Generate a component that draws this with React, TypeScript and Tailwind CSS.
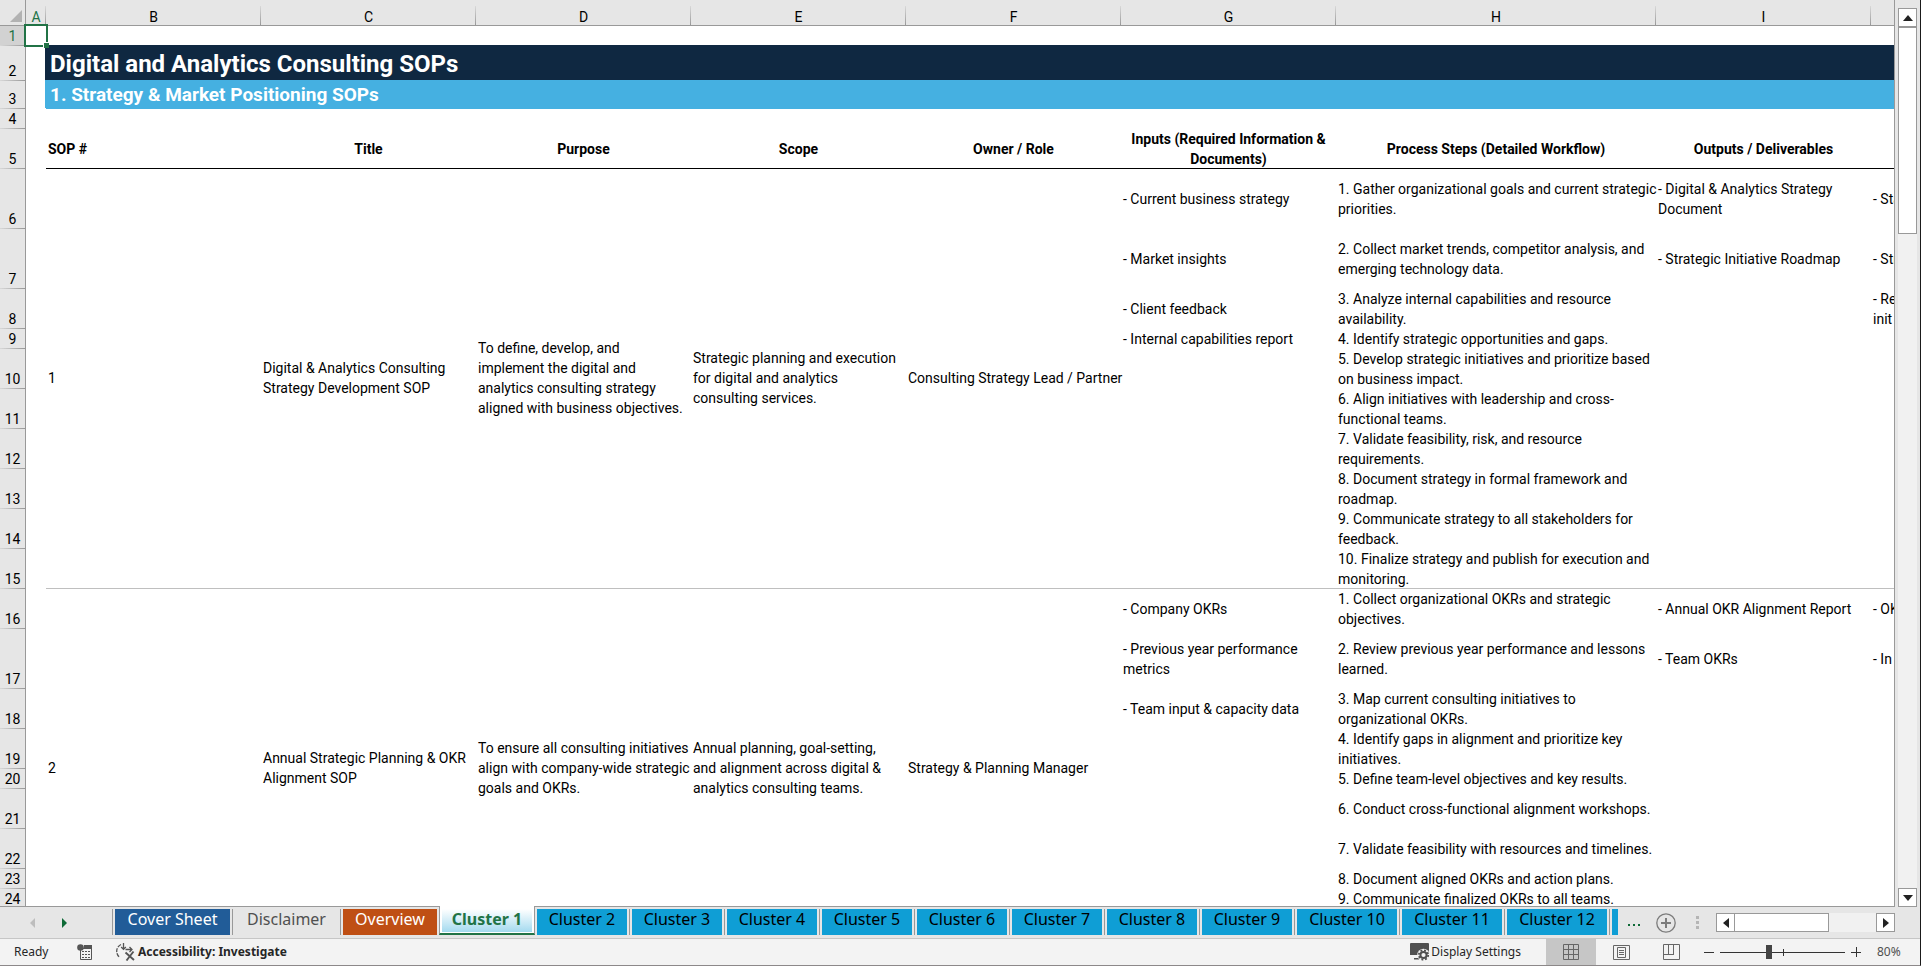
import { useState } from "react";
import clsx from "clsx";

type Cells = [string, string, string, string];

type SheetRow = {
  n: number;
  height: string;
  merged?: string[];
  span?: number;
  last?: boolean;
  cells: Cells;
};

const columns = ["B", "C", "D", "E", "F", "G", "H", "I"];

const headings = [
  "Title",
  "Purpose",
  "Scope",
  "Owner / Role",
  "Inputs (Required Information &\nDocuments)",
  "Process Steps (Detailed Workflow)",
  "Outputs / Deliverables",
  "",
];

const rows: SheetRow[] = [
  {
    n: 6,
    height: "h-[60px]",
    span: 10,
    merged: [
      "1",
      "Digital & Analytics Consulting\nStrategy Development SOP",
      "To define, develop, and\nimplement the digital and\nanalytics consulting strategy\naligned with business objectives.",
      "Strategic planning and execution\nfor digital and analytics\nconsulting services.",
      "Consulting Strategy Lead / Partner",
    ],
    cells: [
      "- Current business strategy",
      "1. Gather organizational goals and current strategic\npriorities.",
      "- Digital & Analytics Strategy\nDocument",
      "- Sta",
    ],
  },
  {
    n: 7,
    height: "h-[60px]",
    cells: [
      "- Market insights",
      "2. Collect market trends, competitor analysis, and\nemerging technology data.",
      "- Strategic Initiative Roadmap",
      "- Str",
    ],
  },
  {
    n: 8,
    height: "h-10",
    cells: [
      "- Client feedback",
      "3. Analyze internal capabilities and resource\navailability.",
      "",
      "- Re\ninit",
    ],
  },
  {
    n: 9,
    height: "h-5",
    cells: [
      "- Internal capabilities report",
      "4. Identify strategic opportunities and gaps.",
      "",
      "",
    ],
  },
  {
    n: 10,
    height: "h-10",
    cells: ["", "5. Develop strategic initiatives and prioritize based\non business impact.", "", ""],
  },
  {
    n: 11,
    height: "h-10",
    cells: ["", "6. Align initiatives with leadership and cross-\nfunctional teams.", "", ""],
  },
  {
    n: 12,
    height: "h-10",
    cells: ["", "7. Validate feasibility, risk, and resource\nrequirements.", "", ""],
  },
  {
    n: 13,
    height: "h-10",
    cells: ["", "8. Document strategy in formal framework and\nroadmap.", "", ""],
  },
  {
    n: 14,
    height: "h-10",
    cells: ["", "9. Communicate strategy to all stakeholders for\nfeedback.", "", ""],
  },
  {
    n: 15,
    height: "h-10",
    last: true,
    cells: ["", "10. Finalize strategy and publish for execution and\nmonitoring.", "", ""],
  },
  {
    n: 16,
    height: "h-10",
    span: 10,
    merged: [
      "2",
      "Annual Strategic Planning & OKR\nAlignment SOP",
      "To ensure all consulting initiatives\nalign with company-wide strategic\ngoals and OKRs.",
      "Annual planning, goal-setting,\nand alignment across digital &\nanalytics consulting teams.",
      "Strategy & Planning Manager",
    ],
    cells: [
      "- Company OKRs",
      "1. Collect organizational OKRs and strategic\nobjectives.",
      "- Annual OKR Alignment Report",
      "- OK",
    ],
  },
  {
    n: 17,
    height: "h-[60px]",
    cells: [
      "- Previous year performance\nmetrics",
      "2. Review previous year performance and lessons\nlearned.",
      "- Team OKRs",
      "- In",
    ],
  },
  {
    n: 18,
    height: "h-10",
    cells: [
      "- Team input & capacity data",
      "3. Map current consulting initiatives to\norganizational OKRs.",
      "",
      "",
    ],
  },
  {
    n: 19,
    height: "h-10",
    cells: ["", "4. Identify gaps in alignment and prioritize key\ninitiatives.", "", ""],
  },
  { n: 20, height: "h-5", cells: ["", "5. Define team-level objectives and key results.", "", ""] },
  { n: 21, height: "h-10", cells: ["", "6. Conduct cross-functional alignment workshops.", "", ""] },
  { n: 22, height: "h-10", cells: ["", "7. Validate feasibility with resources and timelines.", "", ""] },
  { n: 23, height: "h-5", cells: ["", "8. Document aligned OKRs and action plans.", "", ""] },
  { n: 24, height: "h-5", cells: ["", "9. Communicate finalized OKRs to all teams.", "", ""] },
  { n: 25, height: "h-10", last: true, cells: ["", "", "", ""] },
];

const tabs = [
  { name: "Cover Sheet", width: "w-[120px]", fill: "bg-[#215c98] text-white" },
  { name: "Disclaimer", width: "w-[108px]", fill: "text-[#505050]" },
  { name: "Overview", width: "w-[99px]", fill: "bg-[#bf4f14] text-white" },
  { name: "Cluster 1", width: "w-[96px]", fill: "" },
  { name: "Cluster 2", width: "w-[95px]", fill: "bg-[#0f9ed5] text-black" },
  { name: "Cluster 3", width: "w-[95px]", fill: "bg-[#0f9ed5] text-black" },
  { name: "Cluster 4", width: "w-[95px]", fill: "bg-[#0f9ed5] text-black" },
  { name: "Cluster 5", width: "w-[95px]", fill: "bg-[#0f9ed5] text-black" },
  { name: "Cluster 6", width: "w-[95px]", fill: "bg-[#0f9ed5] text-black" },
  { name: "Cluster 7", width: "w-[95px]", fill: "bg-[#0f9ed5] text-black" },
  { name: "Cluster 8", width: "w-[95px]", fill: "bg-[#0f9ed5] text-black" },
  { name: "Cluster 9", width: "w-[95px]", fill: "bg-[#0f9ed5] text-black" },
  { name: "Cluster 10", width: "w-[105px]", fill: "bg-[#0f9ed5] text-black" },
  { name: "Cluster 11", width: "w-[105px]", fill: "bg-[#0f9ed5] text-black" },
  { name: "Cluster 12", width: "w-[105px]", fill: "bg-[#0f9ed5] text-black" },
];

const RowHead = ({ n, selected }: { n: number; selected?: boolean }) => (
  <th
    scope="row"
    className={clsx(
      "border-r border-[#999999] p-0 text-center align-bottom font-normal",
      "bg-[linear-gradient(to_right,#d8d8d8,#999999)] bg-[length:100%_1px] bg-bottom bg-no-repeat",
      selected ? "bg-[#d2d2d2] text-[#217346]" : "bg-[#e6e6e6] text-black"
    )}
  >
    {n}
  </th>
);

const ColHead = ({ name, selected }: { name: string; selected?: boolean }) => (
  <th
    scope="col"
    className={clsx(
      "border-b border-[#999999] p-0 pt-2 text-center leading-4 font-normal",
      "bg-[linear-gradient(to_bottom,#d8d8d8,#999999)] bg-[length:1px_19px] bg-right-bottom bg-no-repeat",
      selected ? "text-[#217346]" : "text-black"
    )}
  >
    {name}
  </th>
);

const Sheet = () => (
  <div className="min-w-0 flex-1 overflow-hidden border-r border-b border-[#999999] bg-white">
    <table className="w-[2086px] table-fixed border-separate border-spacing-0 font-['Roboto',sans-serif] text-sm leading-5 text-black">
      <colgroup>
        <col className="w-[26px]" />
        <col className="w-5" />
        {columns.map((c) => (
          <col key={c} className={c === "H" ? "w-[320px]" : "w-[215px]"} />
        ))}
        <col className="w-[215px]" />
      </colgroup>
      <thead>
        <tr className="h-[26px] bg-[#e6e6e6]">
          <td className="border-r border-b border-[#999999] p-0 align-bottom">
            <svg width="12" height="12" viewBox="0 0 12 12" className="mr-[3px] mb-[3px] ml-auto block">
              <path d="M12 0v12H0z" fill="#b2b2b2" />
            </svg>
          </td>
          <ColHead name="A" selected />
          {columns.map((c) => (
            <ColHead key={c} name={c} />
          ))}
          <ColHead name="" />
        </tr>
      </thead>
      <tbody>
        <tr className="h-5">
          <RowHead n={1} selected />
          <td className="relative p-0">
            <div className="absolute -inset-x-0.5 -top-0.5 -bottom-px z-10 border-2 border-[#217346]">
              <span className="absolute -right-[3px] -bottom-[3px] size-[6px] border-t border-l border-white bg-[#217346]" />
            </div>
          </td>
          <td colSpan={9} />
        </tr>
        <tr className="h-[35px]">
          <RowHead n={2} />
          <td />
          <td
            colSpan={9}
            className="bg-[#0f2841] p-0 pl-1 text-2xl leading-8 font-bold text-white shadow-[-1px_-1px_0_#0f2841]"
          >
            Digital and Analytics Consulting SOPs
          </td>
        </tr>
        <tr className="h-7">
          <RowHead n={3} />
          <td />
          <td
            colSpan={9}
            className="bg-[#45b0e1] p-0 pl-1 text-[19px] leading-6 font-bold text-white shadow-[-1px_-1px_0_#45b0e1]"
          >
            1. Strategy &amp; Market Positioning SOPs
          </td>
        </tr>
        <tr className="h-5">
          <RowHead n={4} />
          <td colSpan={10} />
        </tr>
        <tr className="h-10">
          <RowHead n={5} />
          <td />
          <th scope="col" className="p-0 px-0.5 text-left font-bold shadow-[inset_0_-1px_0_#000000]">
            SOP #
          </th>
          {headings.map((h, i) => (
            <th
              key={i}
              scope="col"
              className="p-0 text-center font-bold whitespace-pre shadow-[inset_0_-1px_0_#000000]"
            >
              {h}
            </th>
          ))}
        </tr>
        {rows.map((r) => (
          <tr key={r.n} className={r.height}>
            <RowHead n={r.n} />
            <td />
            {r.merged?.map((text, i) => (
              <td
                key={i}
                rowSpan={r.span}
                className="p-0 px-0.5 pb-0.5 align-middle whitespace-pre shadow-[inset_0_-1px_0_#bfbfbf]"
              >
                {text}
              </td>
            ))}
            {r.cells.map((text, i) => (
              <td
                key={i}
                className={clsx(
                  "p-0 px-0.5 align-middle whitespace-pre",
                  r.last && "shadow-[inset_0_-1px_0_#bfbfbf]"
                )}
              >
                {text}
              </td>
            ))}
          </tr>
        ))}
      </tbody>
    </table>
  </div>
);

const Arrow = ({ d, color = "#222222" }: { d: string; color?: string }) => (
  <svg width="10" height="10" viewBox="0 0 10 10">
    <path d={d} fill={color} />
  </svg>
);

const scrollButton =
  "flex size-[19px] shrink-0 items-center justify-center border border-[#999999] bg-white";

const VerticalScroll = () => (
  <div className="mx-[3px] flex w-[19px] flex-col pt-2">
    <button aria-label="Scroll up" className={scrollButton}>
      <Arrow d="M0 8 5 2 10 8z" />
    </button>
    <div className="flex-1 bg-[#f1f1f1]">
      <div className="h-[24%] border border-[#999999] bg-white" />
    </div>
    <button aria-label="Scroll down" className={scrollButton}>
      <Arrow d="M0 2 5 8 10 2z" />
    </button>
  </div>
);

const TabBar = ({ active, onSelect }: { active: string; onSelect: (name: string) => void }) => (
  <div className="flex h-8 border-b border-[#c6c6c6] font-['Noto_Sans',sans-serif] text-base leading-5">
    <div className="flex w-28 shrink-0 items-center pl-[27px]">
      <button aria-label="Previous sheets" className="flex">
        <Arrow d="M8 0v10L3 5z" color="#bdbdbd" />
      </button>
      <button aria-label="Next sheets" className="ml-[23px] flex">
        <Arrow d="M2 0v10L7 5z" color="#0e6a37" />
      </button>
    </div>
    <div className="flex min-w-0 flex-1 pt-0.5">
      {tabs.map((t) =>
        t.name === active ? (
          <button
            key={t.name}
            onClick={() => onSelect(t.name)}
            className={clsx(
              "relative z-10 -mt-[3px] -mr-px h-[29px] shrink-0 border-x border-b-2 border-x-[#999999] border-b-[#217346] bg-white px-0.5 pt-[3px] pb-px",
              t.width
            )}
          >
            <span className="block h-full bg-linear-to-b from-white to-[#a3daef] font-bold text-[#217346]">
              {t.name}
            </span>
          </button>
        ) : (
          <button
            key={t.name}
            onClick={() => onSelect(t.name)}
            className={clsx("h-[26px] shrink-0 border-l border-[#999999] px-0.5", t.width)}
          >
            <span className={clsx("block h-full", t.fill || "bg-[#0f9ed5] text-black")}>{t.name}</span>
          </button>
        )
      )}
      <div className="h-[26px] w-[9px] border-l border-[#999999] pl-0.5">
        <div className="h-full bg-[#0f9ed5]" />
      </div>
    </div>
    <div className="mr-[25px] flex shrink-0 items-center">
      <button aria-label="More sheets" className="flex">
        <svg width="14" height="14" viewBox="0 0 14 14" fill="#0e6a37">
          <path d="M1 8h2v2H1zM6 8h2v2H6zM11 8h2v2h-2z" />
        </svg>
      </button>
      <button aria-label="New sheet" className="ml-[15px] flex">
        <svg width="20" height="20" viewBox="0 0 20 20" fill="none" stroke="#7c7c7c">
          <circle cx="10" cy="10" r="9.2" strokeWidth="1.3" />
          <path d="M10 5v10M5 10h10" strokeWidth="2" />
        </svg>
      </button>
      <svg width="3" height="13" viewBox="0 0 3 13" fill="#b5b5b5" className="ml-5">
        <path d="M0 0h3v3H0zM0 5h3v3H0zM0 10h3v3H0z" />
      </svg>
      <div className="ml-[17px] flex w-[179px]">
        <button aria-label="Scroll left" className={scrollButton}>
          <Arrow d="M8 0v10L2 5z" />
        </button>
        <div className="flex-1 bg-[#f1f1f1]">
          <div className="h-full w-2/3 border border-l-0 border-[#999999] bg-white" />
        </div>
        <button aria-label="Scroll right" className={scrollButton}>
          <Arrow d="M2 0v10L8 5z" />
        </button>
      </div>
    </div>
  </div>
);

const MacroIcon = () => (
  <svg width="16" height="16" viewBox="0 0 16 16">
    <path d="M3.5 4.5h11v11h-11z" fill="#f3f3f3" stroke="#555555" />
    <path d="M7 1h8v4H7z" fill="#555555" />
    <path
      d="M5 7h2v1H5zM8 7h2v1H8zM11 7h2v1h-2zM5 10h2v1H5zM8 10h2v1H8zM11 10h2v1h-2zM5 13h2v1H5zM8 13h2v1H8zM11 13h2v1h-2z"
      fill="#555555"
    />
    <circle cx="3.5" cy="3.5" r="3.3" fill="#555555" />
  </svg>
);

const AccessibilityIcon = () => (
  <svg width="20" height="18" viewBox="0 0 20 18" fill="none" stroke="#555555">
    <path d="M5 1.5A7.5 7.5 0 0 0 4 14.5" strokeWidth="1.3" strokeDasharray="4 1.2" />
    <path d="M7.500 0v6M5.200 4l2.300 2.400L9.800 4" strokeWidth="1.3" />
    <path d="M9.500 6.500h6.500M13.500 4l2.500 2.500L13.500 9" strokeWidth="1.3" />
    <path d="M9.500 9.500l8.500 7.500M17.500 8.500 10.500 17.500" strokeWidth="1.9" />
  </svg>
);

const DisplayIcon = () => (
  <svg width="20" height="18" viewBox="0 0 20 18">
    <path d="M1 0h17a1 1 0 0 1 1 1v11H0V1a1 1 0 0 1 1-1z" fill="#505050" />
    <path d="M4 15h7v1.5H4z" fill="#505050" />
    <circle cx="13.5" cy="12" r="6.2" fill="#f3f3f3" />
    <circle cx="13.5" cy="12" r="3.1" fill="none" stroke="#505050" strokeWidth="2" />
    <circle cx="13.5" cy="12" r="4.7" fill="none" stroke="#505050" strokeWidth="1.8" strokeDasharray="1.9 1.79" />
  </svg>
);

const StatusBar = () => {
  const [zoom, setZoom] = useState(80);
  return (
    <div className="flex h-[26px] items-center bg-[#f3f3f3] pl-3.5 font-['Noto_Sans',sans-serif] text-xs text-[#262626]">
      <span className="w-[63px]">Ready</span>
      <button aria-label="Record macro" className="flex w-[39px]">
        <MacroIcon />
      </button>
      <button className="flex items-center gap-0.5 font-bold">
        <AccessibilityIcon />
        Accessibility: Investigate
      </button>
      <button className="ml-auto flex items-center gap-px">
        <DisplayIcon />
        Display Settings
      </button>
      <div className="ml-[25px] flex h-full">
        <button aria-label="Normal" className="flex w-[50px] items-center justify-center bg-[#c6c6c6]">
          <svg width="16" height="16" viewBox="0 0 16 16" fill="none" stroke="#666666">
            <path d="M.5.5h15v15H.5zM5.5.5v15M10.5.5v15M.5 5.5h15M.5 10.5h15" />
          </svg>
        </button>
        <button aria-label="Page Layout" className="flex w-[50px] items-center justify-center">
          <svg width="17" height="15" viewBox="0 0 17 15" fill="none" stroke="#666666">
            <path d="M.5.5h16v14H.5zM4.5 2.5h8v10h-8zM6 5.5h5M6 7.5h5M6 9.5h5" />
          </svg>
        </button>
        <button aria-label="Page Break Preview" className="flex w-[50px] items-center justify-center">
          <svg width="17" height="16" viewBox="0 0 17 16" fill="none" stroke="#666666">
            <path d="M.5.5h16v15H.5zM.5 10.5h10.5M5.5.5v10M10.5.5v10" />
          </svg>
        </button>
      </div>
      <button aria-label="Zoom out" className="ml-2 flex" onClick={() => setZoom(Math.max(10, zoom - 10))}>
        <svg width="10" height="10" viewBox="0 0 10 10" stroke="#333333">
          <path d="M0 5.5h10" />
        </svg>
      </button>
      <div className="relative ml-1.5 flex h-3.5 w-[125px] items-center">
        <div className="absolute inset-x-0 top-[7px] h-px bg-[#333333]" />
        <div className="absolute top-1 left-1/2 h-[7px] w-px bg-[#333333]" />
        <input
          type="range"
          aria-label="Zoom"
          min={10}
          max={190}
          value={zoom}
          onChange={(e) => setZoom(Number(e.target.value))}
          className="relative h-3.5 w-full appearance-none bg-transparent [&::-webkit-slider-thumb]:h-3.5 [&::-webkit-slider-thumb]:w-1.5 [&::-webkit-slider-thumb]:appearance-none [&::-webkit-slider-thumb]:bg-[#444444]"
        />
      </div>
      <button aria-label="Zoom in" className="ml-1.5 flex" onClick={() => setZoom(Math.min(190, zoom + 10))}>
        <svg width="10" height="10" viewBox="0 0 10 10" stroke="#333333">
          <path d="M0 5.5h10M5.5 0v10" />
        </svg>
      </button>
      <span className="mr-[18px] ml-4 w-[25px] text-[#505050]">{zoom}%</span>
    </div>
  );
};

const App = () => {
  const [active, setActive] = useState("Cluster 1");
  return (
    <div className="flex h-screen flex-col overflow-hidden border-r border-b border-r-[#1a1a1a] border-b-[#8c8889] bg-[#e6e6e6]">
      <div className="flex min-h-0 flex-1">
        <Sheet />
        <VerticalScroll />
      </div>
      <TabBar active={active} onSelect={setActive} />
      <StatusBar />
    </div>
  );
};

export default App;
